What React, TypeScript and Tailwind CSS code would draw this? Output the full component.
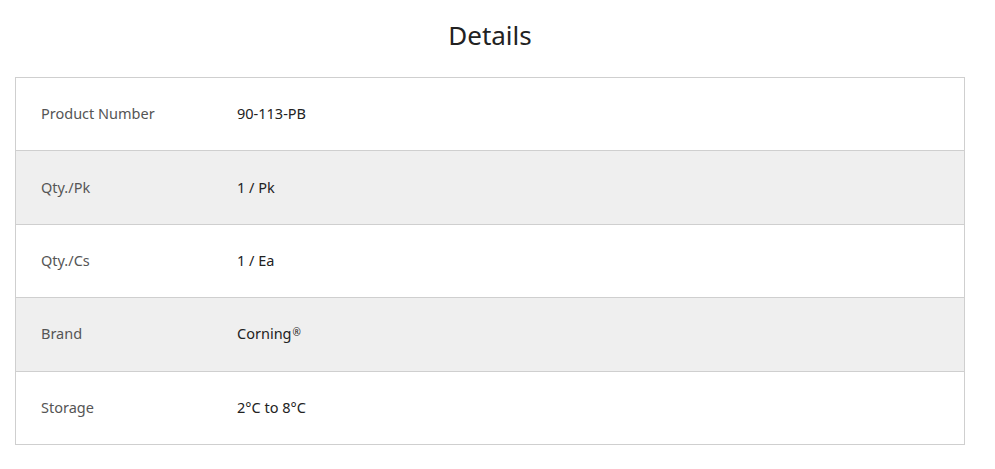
const rows = [
  { label: "Product Number", value: "90-113-PB" },
  { label: "Qty./Pk", value: "1 / Pk" },
  { label: "Qty./Cs", value: "1 / Ea" },
  { label: "Brand", value: "Corning", reg: true },
  { label: "Storage", value: "2°C to 8°C" },
];

export default function App() {
  return (
    <div className="w-[995px] h-[469px] bg-white font-['Noto_Sans',sans-serif]">
      <div className="ml-[15px] w-[950px]">
        <h2 className="pt-[16px] h-[77px] text-center text-[26px] leading-[38px] text-[#222]">Details</h2>
        <div className="border border-[#cfcfcf]">
          {rows.map((r, i) => (
            <div
              key={r.label}
              className={`box-content flex items-center h-[72.4px] text-[14.5px] ${i > 0 ? "border-t border-[#cfcfcf]" : ""} ${i % 2 === 1 ? "bg-[#efefef]" : "bg-white"}`}
            >
              <div className="w-[221px] pl-[25px] text-[#555]">{r.label}</div>
              <div className="text-[#222]">
                {r.value}
                {r.reg && <sup className="text-[10px] relative top-[-3px] ml-[1px]">®</sup>}
              </div>
            </div>
          ))}
        </div>
      </div>
    </div>
  );
}
